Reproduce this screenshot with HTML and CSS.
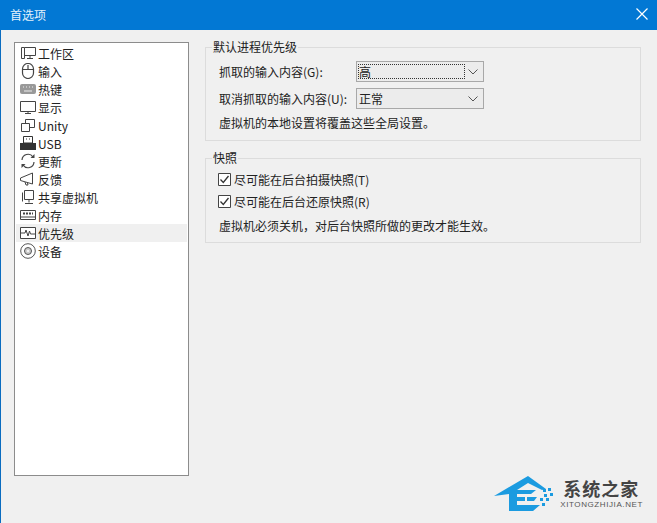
FILE: index.html
```html
<!DOCTYPE html>
<html lang="zh">
<head>
<meta charset="utf-8">
<title>首选项</title>
<link rel="stylesheet" href="styles.css">
</head>
<body>
<div class="window">
  <header class="titlebar">
    <span class="title">首选项</span>
    <svg class="close" width="12" height="12" viewBox="0 0 12 12"><path d="M.5.5l11 11M11.5.5l-11 11" stroke="#fff" stroke-width="1.2" fill="none"/></svg>
  </header>
  <main class="content">
    <ul class="nav">
      <li class="nav-item"><svg class="ico" viewBox="0 0 16 16"><path d="M1.500 2.500h3v11h-3zM4.500 2.500h11v8h-11M10 10.500v3M7 13.500h6" fill="none" stroke="#444"/></svg>工作区</li>
      <li class="nav-item"><svg class="ico" viewBox="0 0 16 16"><rect x="2.500" y=".5" width="11" height="15" rx="5.500" fill="none" stroke="#444" stroke-width="1.200"/><path d="M2.500 6.500h11M8 2v4.500" fill="none" stroke="#444" stroke-width="1.200"/></svg>输入</li>
      <li class="nav-item"><svg class="ico" viewBox="0 0 16 16"><rect x="0" y="3" width="16" height="10" rx="2" fill="#999"/><path d="M3 6h1M6 6h1M9 6h1M12 6h1M4 10h8" stroke="#eee"/></svg>热键</li>
      <li class="nav-item"><svg class="ico" viewBox="0 0 16 16"><path d="M.5 2.500h15v10H.5zM5 14.500h6" fill="none" stroke="#444"/><path d="M8 12.500v2" stroke="#444"/></svg>显示</li>
      <li class="nav-item"><svg class="ico" viewBox="0 0 16 16"><path d="M1.500 6.500h8v8h-8zM5.500 6.500v-4h9v8h-5" fill="none" stroke="#444"/></svg>Unity</li>
      <li class="nav-item"><svg class="ico" viewBox="0 0 16 16"><path d="M0 8h16v7H0z" fill="#333"/><path d="M3.500 1.500h9v6.500h-9z" fill="#fff" stroke="#333"/><path d="M6 4h1M9 4h1" stroke="#333"/></svg>USB</li>
      <li class="nav-item"><svg class="ico" viewBox="0 0 16 16"><path d="M2 7a6 6 0 0 1 11-3M14 9a6 6 0 0 1-11 3" fill="none" stroke="#444" stroke-width="1.200"/><path d="M14.500 1v4h-4zM1.500 15v-4h4z" fill="#444"/></svg>更新</li>
      <li class="nav-item"><svg class="ico" viewBox="0 0 16 16"><path d="M.5 7l12-5v11L.5 9.500zM5 11l1 3h2l-.5-2" fill="none" stroke="#444"/></svg>反馈</li>
      <li class="nav-item"><svg class="ico" viewBox="0 0 16 16"><path d="M4.500 1.500h9v9h-9zM9 10.500v3M5 14.500h8M2.500 3.500v9" fill="none" stroke="#444"/></svg>共享虚拟机</li>
      <li class="nav-item"><svg class="ico" viewBox="0 0 16 16"><path d="M.5 3.500h15v9H.5zM.5 10h15" fill="none" stroke="#444"/><path d="M3 6.500h10" stroke="#444" stroke-width="2" stroke-dasharray="2 1"/></svg>内存</li>
      <li class="nav-item is-active"><svg class="ico" viewBox="0 0 16 16"><path d="M.5 2.500h15v11H.5z" fill="#fff" stroke="#444"/><path d="M1 8h4l1-3 2 6 1.500-5 1 3H15" fill="none" stroke="#444"/></svg>优先级</li>
      <li class="nav-item"><svg class="ico" viewBox="0 0 16 16"><circle cx="8" cy="8" r="7.300" fill="none" stroke="#555"/><circle cx="8" cy="8" r="3.500" fill="#ccc" stroke="#555"/><circle cx="8" cy="8" r="1" fill="#fff"/></svg>设备</li>
    </ul>
    <div class="panel">
      <fieldset class="group group-first">
        <legend class="legend">默认进程优先级</legend>
        <div class="field">
          <label class="field-label">抓取的输入内容(G):</label>
          <div class="combo"><span class="combo-text is-focus">高</span><svg class="chev" width="10" height="6" viewBox="0 0 10 6"><path d="M.5.5L5 5 9.500.5" fill="none" stroke="#555"/></svg></div>
        </div>
        <div class="field">
          <label class="field-label">取消抓取的输入内容(U):</label>
          <div class="combo"><span class="combo-text">正常</span><svg class="chev" width="10" height="6" viewBox="0 0 10 6"><path d="M.5.5L5 5 9.500.5" fill="none" stroke="#555"/></svg></div>
        </div>
        <p class="note">虚拟机的本地设置将覆盖这些全局设置。</p>
      </fieldset>
      <fieldset class="group group-second">
        <legend class="legend">快照</legend>
        <div class="check"><svg class="box" width="13" height="13" viewBox="0 0 13 13"><path d="M.5.5h12v12H.5z" fill="#fff" stroke="#444"/><path d="M2.500 6.500L5.300 9.500 10.500 3" fill="none" stroke="#333" stroke-width="1.300"/></svg>尽可能在后台拍摄快照(T)</div>
        <div class="check"><svg class="box" width="13" height="13" viewBox="0 0 13 13"><path d="M.5.5h12v12H.5z" fill="#fff" stroke="#444"/><path d="M2.500 6.500L5.300 9.500 10.500 3" fill="none" stroke="#333" stroke-width="1.300"/></svg>尽可能在后台还原快照(R)</div>
        <p class="note">虚拟机必须关机，对后台快照所做的更改才能生效。</p>
      </fieldset>
    </div>
  </main>
  <div class="mark">
    <svg class="mark-logo" width="60" height="35" viewBox="0 0 60 35">
      <path d="M0 20L34 0l18 13-4 1-14-7-11 7v21h-8V18z" fill="#1b9be0"/>
      <path d="M23 14h19l-5 4H23zM23 21h8v4h-8zM33 21h10l-3 4h-7zM23 29h23l-7 6H23z" fill="#1b9be0"/>
      <path d="M49 13h3v3h-3zM54 12h3v3h-3zM50 18h3v3h-3zM56 17h3v3h-3zM46 22h3v3h-3zM52 22h3v3h-3zM48 27h3v3h-3z" fill="#1b9be0"/>
    </svg>
    <div class="mark-text">
      <div class="mark-cn">系统之家</div>
      <div class="mark-en">XITONGZHIJIA.NET</div>
    </div>
  </div>
</div>
</body>
</html>
```

FILE: styles.css
```css
* { box-sizing: border-box; }
html, body { margin: 0; padding: 0; }
body {
  width: 657px;
  height: 523px;
  overflow: hidden;
  font-family: "Noto Sans CJK SC", "Liberation Sans", sans-serif;
  font-size: 12px;
  color: #222;
}
.window {
  position: relative;
  width: 657px;
  height: 523px;
  display: flex;
  flex-direction: column;
  background: #f0f0f0;
  border-left: 1px solid #0a6cc0;
}
.titlebar {
  height: 30px;
  flex: none;
  margin-left: -1px;
  padding: 0 9px 2px 10px;
  display: flex;
  align-items: center;
  justify-content: space-between;
  background: #0278d4;
  color: #e4f2fb;
}
.title { font-size: 12px; }
.content {
  flex: 1;
  display: flex;
  align-items: flex-start;
  padding: 9px 16px 0 13px;
  gap: 16px;
}
.nav {
  list-style: none;
  margin: 3px 0 0;
  padding: 1px;
  width: 175px;
  height: 434px;
  flex: none;
  background: #fff;
  border: 1px solid #8c8c8c;
}
.nav-item {
  height: 18px;
  display: flex;
  align-items: center;
  gap: 2px;
  padding-left: 4px;
  white-space: nowrap;
}
.nav-item.is-active { background: #f0f0f0; }
.ico { width: 16px; height: 16px; flex: none; }
.panel {
  flex: 1;
  display: flex;
  flex-direction: column;
  gap: 9px;
}
.group {
  margin: 0;
  padding: 6px 13px 0 13px;
  border: 1px solid #dcdcdc;
  min-width: 0;
}
.group-first { height: 102px; }
.group-second { height: 93px; padding-top: 2px; }
.legend {
  margin-left: -7px;
  padding: 0 1px;
  line-height: 16px;
  font-size: 12px;
}
.field {
  display: flex;
  align-items: center;
  height: 21px;
  margin-bottom: 6px;
}
.field-label { width: 137px; flex: none; }
.combo {
  width: 128px;
  height: 21px;
  display: flex;
  align-items: center;
  justify-content: space-between;
  padding: 2px 5px 2px 1px;
  background: #ececec;
  border: 1px solid #a8a8a8;
}
.combo-text {
  flex: 0 0 107px;
  height: 15px;
  line-height: 14px;
  border: 1px solid transparent;
}
.combo-text.is-focus { border: 1px dotted #333; }
.note { margin: -1px 0 0; line-height: 18px; }
.check {
  height: 22px;
  display: flex;
  align-items: center;
  gap: 3px;
}
.box { flex: none; margin-left: -1px; }
.check + .note { margin-top: 5px; }
.mark {
  position: absolute;
  right: 14px;
  bottom: 12px;
  display: flex;
  align-items: center;
  gap: 6px;
}
.mark-cn {
  margin-left: 3px;
  font-size: 18px;
  line-height: 22px;
  font-weight: 700;
  letter-spacing: 1px;
  color: #444;
}
.mark-en {
  font-family: "Liberation Sans", sans-serif;
  font-size: 8px;
  line-height: 12px;
  letter-spacing: .6px;
  color: #555;
}
```
